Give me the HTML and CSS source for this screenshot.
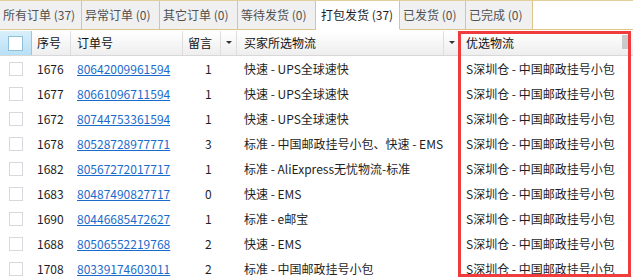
FILE: index.html
```html
<!DOCTYPE html>
<html lang="zh-CN">
<head>
    <meta charset="UTF-8">
    <title>订单列表</title>
    <link rel="stylesheet" href="styles.css">
</head>
<body>

    <div class="tabs">
        <div class="tab">所有订单 (37)</div>
        <div class="tab">异常订单 (0)</div>
        <div class="tab">其它订单 (0)</div>
        <div class="tab">等待发货 (0)</div>
        <div class="tab active">打包发货 (37)</div>
        <div class="tab">已发货 (0)</div>
        <div class="tab">已完成 (0)</div>
        <div class="tab-rest"></div>
    </div>

    <div class="grid">
        <div class="row head">
            <div class="cell c-check sel"><span class="box"></span></div>
            <div class="cell c-seq">序号</div>
            <div class="cell c-order">订单号</div>
            <div class="cell c-note">留言<span class="arrow"></span></div>
            <div class="cell c-buyer">买家所选物流<span class="arrow"></span></div>
            <div class="cell c-pref">优选物流<span class="grip"></span></div>
        </div>

        <div class="row">
            <div class="cell c-check"><span class="box"></span></div>
            <div class="cell c-seq">1676</div>
            <div class="cell c-order"><a href="#">80642009961594</a></div>
            <div class="cell c-note">1</div>
            <div class="cell c-buyer">快速 - UPS全球速快</div>
            <div class="cell c-pref">S深圳仓 - 中国邮政挂号小包</div>
        </div>
        <div class="row">
            <div class="cell c-check"><span class="box"></span></div>
            <div class="cell c-seq">1677</div>
            <div class="cell c-order"><a href="#">80661096711594</a></div>
            <div class="cell c-note">1</div>
            <div class="cell c-buyer">快速 - UPS全球速快</div>
            <div class="cell c-pref">S深圳仓 - 中国邮政挂号小包</div>
        </div>
        <div class="row">
            <div class="cell c-check"><span class="box"></span></div>
            <div class="cell c-seq">1672</div>
            <div class="cell c-order"><a href="#">80744753361594</a></div>
            <div class="cell c-note">1</div>
            <div class="cell c-buyer">快速 - UPS全球速快</div>
            <div class="cell c-pref">S深圳仓 - 中国邮政挂号小包</div>
        </div>
        <div class="row">
            <div class="cell c-check"><span class="box"></span></div>
            <div class="cell c-seq">1678</div>
            <div class="cell c-order"><a href="#">80528728977771</a></div>
            <div class="cell c-note">3</div>
            <div class="cell c-buyer">标准 - 中国邮政挂号小包、快速 - EMS</div>
            <div class="cell c-pref">S深圳仓 - 中国邮政挂号小包</div>
        </div>
        <div class="row">
            <div class="cell c-check"><span class="box"></span></div>
            <div class="cell c-seq">1682</div>
            <div class="cell c-order"><a href="#">80567272017717</a></div>
            <div class="cell c-note">1</div>
            <div class="cell c-buyer">标准 - AliExpress无忧物流-标准</div>
            <div class="cell c-pref">S深圳仓 - 中国邮政挂号小包</div>
        </div>
        <div class="row">
            <div class="cell c-check"><span class="box"></span></div>
            <div class="cell c-seq">1683</div>
            <div class="cell c-order"><a href="#">80487490827717</a></div>
            <div class="cell c-note">0</div>
            <div class="cell c-buyer">快速 - EMS</div>
            <div class="cell c-pref">S深圳仓 - 中国邮政挂号小包</div>
        </div>
        <div class="row">
            <div class="cell c-check"><span class="box"></span></div>
            <div class="cell c-seq">1690</div>
            <div class="cell c-order"><a href="#">80446685472627</a></div>
            <div class="cell c-note">1</div>
            <div class="cell c-buyer">标准 - e邮宝</div>
            <div class="cell c-pref">S深圳仓 - 中国邮政挂号小包</div>
        </div>
        <div class="row">
            <div class="cell c-check"><span class="box"></span></div>
            <div class="cell c-seq">1688</div>
            <div class="cell c-order"><a href="#">80506552219768</a></div>
            <div class="cell c-note">2</div>
            <div class="cell c-buyer">快速 - EMS</div>
            <div class="cell c-pref">S深圳仓 - 中国邮政挂号小包</div>
        </div>
        <div class="row">
            <div class="cell c-check"><span class="box"></span></div>
            <div class="cell c-seq">1708</div>
            <div class="cell c-order"><a href="#">80339174603011</a></div>
            <div class="cell c-note">2</div>
            <div class="cell c-buyer">标准 - 中国邮政挂号小包</div>
            <div class="cell c-pref">S深圳仓 - 中国邮政挂号小包</div>
        </div>

        <div class="highlight"></div>
    </div>

</body>
</html>
```

FILE: styles.css
```css
body {
    margin: 0;
    padding: 0;
    background-color: #ffffff;
    font-family: "Noto Sans CJK SC", "Liberation Sans", sans-serif;
    font-size: 12px;
    color: #1e1e1e;
    overflow: hidden;
}

/* tab strip */
.tabs {
    display: flex;
    height: 29px;
    border-top: 1px solid #e3cf9c;
}

.tab {
    box-sizing: border-box;
    height: 29px;
    line-height: 27px;
    padding: 0 3px;
    background-color: #f0f0f0;
    border-right: 1px solid #dcc48a;
    border-bottom: 1px solid #dcc48a;
    color: #505050;
    white-space: nowrap;
}

.tab:nth-child(1) { width: 82px; }
.tab:nth-child(2),
.tab:nth-child(3),
.tab:nth-child(4) { width: 78px; }
.tab:nth-child(6) { width: 66px; }
.tab:nth-child(7) { width: 67px; }

.tab.active {
    width: 84px;
    background-color: #ffffff;
    border-bottom-color: #ffffff;
    color: #1e1e1e;
    padding-left: 5px;
}

.tab-rest {
    flex: 1;
    border-bottom: 1px solid #dcc48a;
}

/* grid */
.grid {
    position: relative;
    margin-top: 1px;
}

.row {
    display: flex;
    height: 25px;
    line-height: 25px;
}

.cell {
    box-sizing: border-box;
    white-space: nowrap;
    overflow: hidden;
}

.c-check { width: 32px; display: flex; align-items: center; justify-content: center; }
.c-seq { width: 39px; padding-left: 5px; }
.c-order { width: 112px; padding-left: 6px; }
.c-note { width: 54px; padding-left: 22px; }
.c-buyer { width: 223px; padding-left: 7px; }
.c-pref { flex: 1; padding-left: 6px; }

.box {
    width: 12px;
    height: 12px;
    border: 1px solid #d6d9de;
    background-color: #ffffff;
}

.row a {
    color: #1a6ccc;
    text-decoration: underline;
}

/* header */
.row.head {
    height: 24px;
    line-height: 24px;
    background: linear-gradient(#ffffff, #eeeeee);
    border-bottom: 1px solid #d8d8d8;
    color: #111111;
}

.head .cell {
    position: relative;
    border-right: 1px solid #dedede;
}

.head .c-check.sel {
    background: linear-gradient(#d9effa, #b8e0f5);
    border-right: 1px solid #8fc9e8;
}

.head .c-check .box {
    width: 13px;
    height: 13px;
    border-color: #90bfdc;
}

.head .c-note { padding-left: 5px; }
.head .c-pref { border-right: none; }

.arrow {
    position: absolute;
    top: 0;
    right: 0;
    width: 15px;
    height: 24px;
    border-left: 1px solid #dedede;
}

.arrow::after {
    content: "";
    position: absolute;
    left: 5px;
    top: 10px;
    border-left: 3px solid transparent;
    border-right: 3px solid transparent;
    border-top: 3px solid #333333;
}

.grip {
    position: absolute;
    top: 4px;
    right: 2px;
    width: 9px;
    height: 14px;
    background-color: #b8b8b8;
    opacity: 0.7;
}

/* red selection frame over the last column */
.highlight {
    position: absolute;
    left: 458px;
    top: 0;
    width: 173px;
    height: 246px;
    box-sizing: border-box;
    border: 3px solid #f03c3c;
}
```
